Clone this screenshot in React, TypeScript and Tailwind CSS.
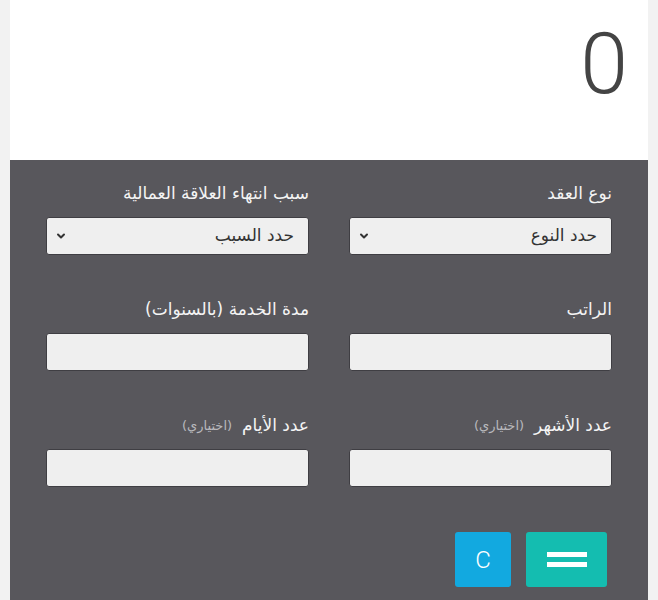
import { ChevronDown } from "lucide-react";

const arabic = { fontFamily: '"DejaVu Sans", "Noto Sans", sans-serif' };

function Label({ text, hint }: { text: string; hint?: boolean }) {
  return (
    <div className="flex h-[22px] items-center gap-[10px] text-[17px] text-[#f4f4f4]" style={arabic}>
      <span>{text}</span>
      {hint && <span className="text-[13px] text-[#b9b9bd]">(اختياري)</span>}
    </div>
  );
}

function SelectBox({ placeholder }: { placeholder: string }) {
  return (
    <div className="mt-[12px] flex h-[38px] items-center justify-between rounded-[3px] border border-[#3f3e43] bg-[#efefef] pl-2 pr-[14px] text-[17px] text-[#333]">
      <span style={arabic}>{placeholder}</span>
      <ChevronDown className="h-3 w-3 text-[#333]" strokeWidth={4} />
    </div>
  );
}

function InputBox() {
  return <div className="mt-[12px] h-[38px] rounded-[3px] border border-[#3f3e43] bg-[#efefef]" />;
}

export default function App() {
  return (
    <div className="h-[600px] w-[658px] overflow-hidden bg-[#f2f2f2] px-[10px]">
      <div className="flex h-full flex-col">
        {/* Display */}
        <div className="flex h-[160px] justify-end bg-white pr-[20px] pt-[14px]">
          <span className="text-[86px] font-light leading-[100px] text-[#444]" style={{ fontFamily: "Roboto, sans-serif" }}>
            0
          </span>
        </div>

        {/* Form */}
        <div dir="rtl" className="flex-1 bg-[#58575c] px-[36px] pt-[23px]">
          <div className="grid grid-cols-2 gap-x-[40px] gap-y-[44px]">
            <div>
              <Label text="نوع العقد" />
              <SelectBox placeholder="حدد النوع" />
            </div>
            <div>
              <Label text="سبب انتهاء العلاقة العمالية" />
              <SelectBox placeholder="حدد السبب" />
            </div>
            <div>
              <Label text="الراتب" />
              <InputBox />
            </div>
            <div>
              <Label text="مدة الخدمة (بالسنوات)" />
              <InputBox />
            </div>
            <div>
              <Label text="عدد الأشهر" hint />
              <InputBox />
            </div>
            <div>
              <Label text="عدد الأيام" hint />
              <InputBox />
            </div>
          </div>

          <div className="mt-[45px] flex gap-[15px] pr-[5px]">
            <button className="flex h-[55px] w-[81px] items-center justify-center rounded-[3px] bg-[#14bdb0]">
              <span className="flex flex-col gap-[5px]">
                <span className="block h-[5px] w-[40px] bg-white" />
                <span className="block h-[5px] w-[40px] bg-white" />
              </span>
            </button>
            <button
              className="flex h-[55px] w-[56px] items-center justify-center rounded-[3px] bg-[#12a9e0] text-[24px] font-light text-white"
              style={{ fontFamily: "Roboto, sans-serif" }}
            >
              C
            </button>
          </div>
        </div>
      </div>
    </div>
  );
}
